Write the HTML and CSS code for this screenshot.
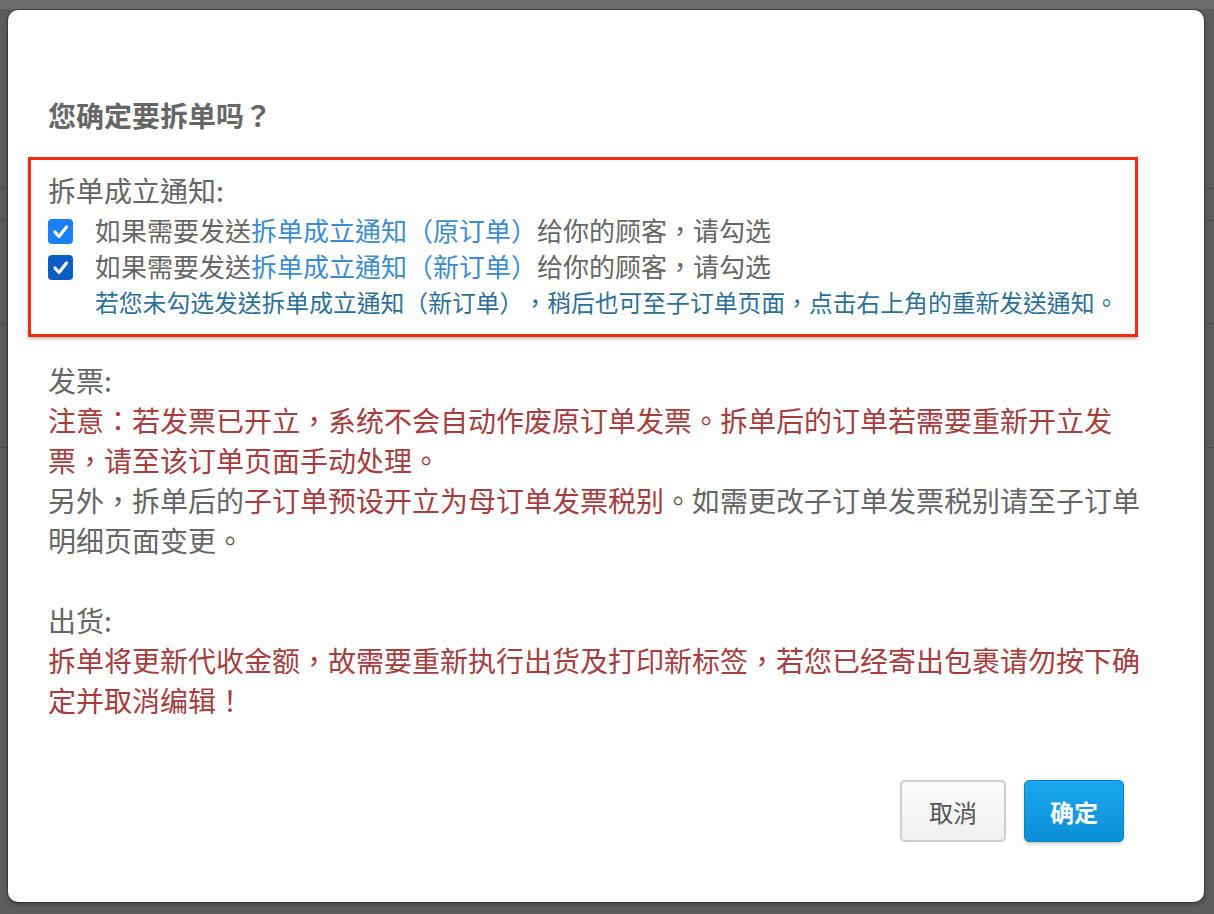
FILE: index.html
```html
<!DOCTYPE html>
<html lang="zh-TW">
<head>
  <meta charset="UTF-8">
  <meta name="viewport" content="width=device-width, initial-scale=1">
  <title>拆单确认</title>
  <link rel="stylesheet" href="styles.css">
</head>
<body>
  <div class="modal">
    <h2 class="modal-title">您确定要拆单吗？</h2>

    <div class="notice-box">
      <p class="box-label">拆单成立通知:</p>
      <label class="check-row">
        <span class="check">
          <svg viewBox="0 0 25 25" width="25" height="25"><path d="M7 13 L11 17.5 L18.5 8" /></svg>
        </span>
        <span>如果需要发送<span class="link">拆单成立通知（原订单）</span>给你的顾客，请勾选</span>
      </label>
      <label class="check-row">
        <span class="check active">
          <svg viewBox="0 0 25 25" width="25" height="25"><path d="M7 13 L11 17.5 L18.5 8" /></svg>
        </span>
        <span>如果需要发送<span class="link">拆单成立通知（新订单）</span>给你的顾客，请勾选</span>
      </label>
      <p class="hint">若您未勾选发送拆单成立通知（新订单），稍后也可至子订单页面，点击右上角的重新发送通知。</p>
    </div>

    <div class="section">
      <p class="section-label">发票:</p>
      <p class="danger">注意：若发票已开立，系统不会自动作废原订单发票。拆单后的订单若需要重新开立发票，请至该订单页面手动处理。</p>
      <p>另外，拆单后的<span class="danger">子订单预设开立为母订单发票税别</span>。如需更改子订单发票税别请至子订单明细页面变更。</p>
    </div>

    <div class="section shipping">
      <p class="section-label">出货:</p>
      <p class="danger">拆单将更新代收金额，故需要重新执行出货及打印新标签，若您已经寄出包裹请勿按下确定并取消编辑！</p>
    </div>

    <div class="modal-footer">
      <button class="btn btn-default">取消</button>
      <button class="btn btn-primary">确定</button>
    </div>
  </div>
</body>
</html>
```

FILE: styles.css
```css
*, *::before, *::after {
  box-sizing: border-box;
}

body {
  margin: 0;
  padding: 10px 10px 12px 8px;
  font-family: "Noto Sans CJK TC", "Noto Sans", sans-serif;
  text-spacing-trim: space-all;
  color: #666;
  background-color: #5d5d5d;
  background-image:
    linear-gradient(#6c6c6c, #6c6c6c),
    linear-gradient(#4f4f4f, #4f4f4f),
    linear-gradient(#4f4f4f, #4f4f4f),
    linear-gradient(#4f4f4f, #4f4f4f),
    linear-gradient(#4f4f4f, #4f4f4f);
  background-size: 100% 9px, 100% 1px, 100% 1px, 100% 1px, 100% 1px;
  background-position: 0 0, 0 188px, 0 220px, 0 323px, 0 447px;
  background-repeat: no-repeat;
}

.modal {
  background: #fff;
  border-radius: 10px;
  box-shadow: 0 0 0 1px rgba(0, 0, 0, 0.25), 0 2px 5px rgba(0, 0, 0, 0.35);
  padding: 85px 46px 60px 40px;
}

.modal p {
  margin: 0;
}

.modal-title {
  margin: 0 0 22px;
  font-size: 28px;
  line-height: 40px;
  font-weight: 700;
  color: #666;
}

/* 拆单通知框 */
.notice-box {
  margin: 0 20px 0 -20px;
  padding: 8px 6px 14px 17px;
  border: 3px solid #f52a0c;
  box-shadow: 0 2px 3px rgba(0, 0, 0, 0.25);
}

.box-label {
  font-size: 28px;
  line-height: 44px;
}

.check-row {
  display: flex;
  align-items: center;
  gap: 22px;
  font-size: 26px;
  line-height: 36px;
  cursor: pointer;
}

.check {
  flex-shrink: 0;
  width: 25px;
  height: 25px;
  margin-top: 2px;
  border-radius: 4px;
  background: #1b80f7;
  display: flex;
}

.check.active {
  background: #0b5ec4;
}

.check svg path {
  fill: none;
  stroke: #fff;
  stroke-width: 3.2;
  stroke-linecap: round;
  stroke-linejoin: round;
}

.link {
  color: #3c8bd2;
}

.hint {
  padding-left: 47px;
  font-size: 23.8px;
  line-height: 36px;
  color: #2b6f98;
}

/* 发票 / 出货 */
.section {
  margin-top: 23px;
  font-size: 28px;
  line-height: 40px;
}

.section.shipping {
  margin-top: 40px;
}

.section-label {
  color: #666;
}

.danger {
  color: #a63d3e;
}

.modal-footer {
  display: flex;
  justify-content: flex-end;
  gap: 18px;
  margin: 60px 34px 0 0;
}

.btn {
  height: 62px;
  font-family: inherit;
  font-size: 24px;
  border-radius: 5px;
  cursor: pointer;
}

.btn-default {
  padding: 0 27px;
  color: #555;
  background: linear-gradient(#fbfbfb, #efefef);
  border: 2px solid #cdcdcd;
}

.btn-primary {
  padding: 0 25px;
  color: #fff;
  font-weight: 700;
  background: linear-gradient(#1ba6ee, #0b8fd7);
  border: 1px solid #0a82c6;
  box-shadow: 0 2px 3px rgba(0, 0, 0, 0.2);
}
```
